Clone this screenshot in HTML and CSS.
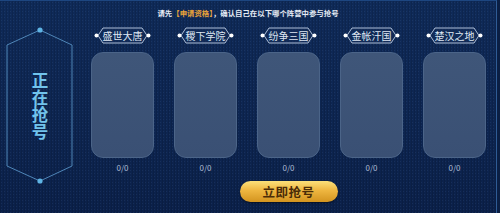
FILE: index.html
```html
<!DOCTYPE html>
<html lang="zh-CN">
<head>
    <meta charset="UTF-8">
    <title>阵营抢号</title>
    <link rel="stylesheet" href="styles.css">
</head>
<body>
    <div class="page">
        <div class="notice">请先<span class="hl">【申请资格】</span>，确认自己在以下哪个阵营中参与抢号</div>
        <div class="main">
            <div class="banner">
                <svg class="banner-frame" width="80" height="160" viewBox="0 0 80 160">
                    <polyline points="40,3 7,18 7,139 40,154 72,139 72,18 40,3" fill="none" stroke="#4f86b8" stroke-width="1"/>
                    <circle cx="40" cy="3" r="2.6" fill="#5fb4e4"/>
                    <circle cx="40" cy="154" r="2.6" fill="#5fb4e4"/>
                </svg>
                <div class="banner-text">正在抢号</div>
            </div>
            <div class="camps">
                <div class="camp-row">
                    <div class="camp">
                        <div class="tag">
                            <svg class="tag-frame" width="57" height="17" viewBox="0 0 57 17">
                                <polygon points="4,8.5 9,1 48,1 53,8.5 48,16 9,16" fill="rgba(20,45,90,0.6)" stroke="#aebfd8" stroke-width="1"/>
                                <circle cx="2.5" cy="8.5" r="2" fill="#fff"/>
                                <circle cx="54.5" cy="8.5" r="2" fill="#fff"/>
                            </svg>
                            <span class="tag-name">盛世大唐</span>
                        </div>
                        <div class="card"></div>
                        <div class="count">0/0</div>
                    </div>
                    <div class="camp">
                        <div class="tag">
                            <svg class="tag-frame" width="57" height="17" viewBox="0 0 57 17">
                                <polygon points="4,8.5 9,1 48,1 53,8.5 48,16 9,16" fill="rgba(20,45,90,0.6)" stroke="#aebfd8" stroke-width="1"/>
                                <circle cx="2.5" cy="8.5" r="2" fill="#fff"/>
                                <circle cx="54.5" cy="8.5" r="2" fill="#fff"/>
                            </svg>
                            <span class="tag-name">稷下学院</span>
                        </div>
                        <div class="card"></div>
                        <div class="count">0/0</div>
                    </div>
                    <div class="camp">
                        <div class="tag">
                            <svg class="tag-frame" width="57" height="17" viewBox="0 0 57 17">
                                <polygon points="4,8.5 9,1 48,1 53,8.5 48,16 9,16" fill="rgba(20,45,90,0.6)" stroke="#aebfd8" stroke-width="1"/>
                                <circle cx="2.5" cy="8.5" r="2" fill="#fff"/>
                                <circle cx="54.5" cy="8.5" r="2" fill="#fff"/>
                            </svg>
                            <span class="tag-name">纷争三国</span>
                        </div>
                        <div class="card"></div>
                        <div class="count">0/0</div>
                    </div>
                    <div class="camp">
                        <div class="tag">
                            <svg class="tag-frame" width="57" height="17" viewBox="0 0 57 17">
                                <polygon points="4,8.5 9,1 48,1 53,8.5 48,16 9,16" fill="rgba(20,45,90,0.6)" stroke="#aebfd8" stroke-width="1"/>
                                <circle cx="2.5" cy="8.5" r="2" fill="#fff"/>
                                <circle cx="54.5" cy="8.5" r="2" fill="#fff"/>
                            </svg>
                            <span class="tag-name">金帐汗国</span>
                        </div>
                        <div class="card"></div>
                        <div class="count">0/0</div>
                    </div>
                    <div class="camp">
                        <div class="tag">
                            <svg class="tag-frame" width="57" height="17" viewBox="0 0 57 17">
                                <polygon points="4,8.5 9,1 48,1 53,8.5 48,16 9,16" fill="rgba(20,45,90,0.6)" stroke="#aebfd8" stroke-width="1"/>
                                <circle cx="2.5" cy="8.5" r="2" fill="#fff"/>
                                <circle cx="54.5" cy="8.5" r="2" fill="#fff"/>
                            </svg>
                            <span class="tag-name">楚汉之地</span>
                        </div>
                        <div class="card"></div>
                        <div class="count">0/0</div>
                    </div>
                </div>
                <button class="grab-btn">立即抢号</button>
            </div>
        </div>
    </div>
</body>
</html>
```

FILE: styles.css
```css
body {
    margin: 0;
    font-family: "Noto Sans CJK SC", "Noto Sans", sans-serif;
    background: #0b1f44;
}
.page {
    width: 497px;
    height: 213px;
    overflow: hidden;
    border-top: 1px solid #1d4680;
    border-right: 1px solid #2f5c96;
    box-sizing: border-box;
    background-color: #0d2650;
    background-image:
        radial-gradient(rgba(120, 160, 220, 0.10) 0.6px, transparent 0.9px),
        repeating-linear-gradient(90deg, rgba(0, 0, 0, 0.10) 0 1px, transparent 1px 3px),
        linear-gradient(180deg, #0f2a58 0%, #0d2550 60%, #0b2049 100%);
    background-size: 3px 3px, 100% 100%, 100% 100%;
}
.notice {
    height: 24px;
    line-height: 23px;
    text-align: center;
    font-size: 7.4px;
    font-weight: bold;
    color: #e6ecf5;
}
.notice .hl {
    color: #e9a23a;
}
.main {
    display: flex;
    margin-top: 2px;
}
.banner {
    position: relative;
    width: 80px;
    height: 160px;
    display: flex;
    align-items: center;
    justify-content: center;
}
.banner-frame {
    position: absolute;
    left: 0;
    top: 0;
}
.banner-text {
    position: relative;
    width: 1em;
    font-size: 16.5px;
    font-weight: bold;
    color: #71c3ec;
    line-height: 17px;
    text-align: center;
    margin-top: -2px;
}
.camps {
    margin-left: 11px;
    display: flex;
    flex-direction: column;
    align-items: center;
}
.camp-row {
    display: flex;
    gap: 20px;
}
.camp {
    width: 63px;
    display: flex;
    flex-direction: column;
    align-items: center;
}
.tag {
    position: relative;
    width: 57px;
    height: 17px;
    display: flex;
    align-items: center;
    justify-content: center;
}
.tag-frame {
    position: absolute;
    left: 0;
    top: 0;
}
.tag-name {
    position: relative;
    font-size: 10px;
    color: #dfe7f3;
    line-height: 1;
}
.card {
    margin-top: 8px;
    width: 63px;
    height: 106px;
    border-radius: 12px;
    box-sizing: border-box;
    border: 1px solid #4b6488;
    background: linear-gradient(180deg, #3f5679 0%, #3a5074 100%);
}
.count {
    margin-top: 5px;
    font-size: 8px;
    line-height: 10px;
    color: #aebdd4;
}
.grab-btn {
    margin-top: 8px;
    width: 98px;
    height: 21px;
    border: none;
    border-radius: 11px;
    padding: 0;
    background: linear-gradient(180deg, #fbe07a 0%, #eeb640 45%, #d3941f 100%);
    box-shadow: 0 1px 2px rgba(0, 0, 0, 0.5);
    font-family: "Noto Sans CJK SC", sans-serif;
    font-size: 12.5px;
    font-weight: bold;
    letter-spacing: 0.5px;
    color: #4a2c08;
    line-height: 21px;
    cursor: pointer;
}
```
